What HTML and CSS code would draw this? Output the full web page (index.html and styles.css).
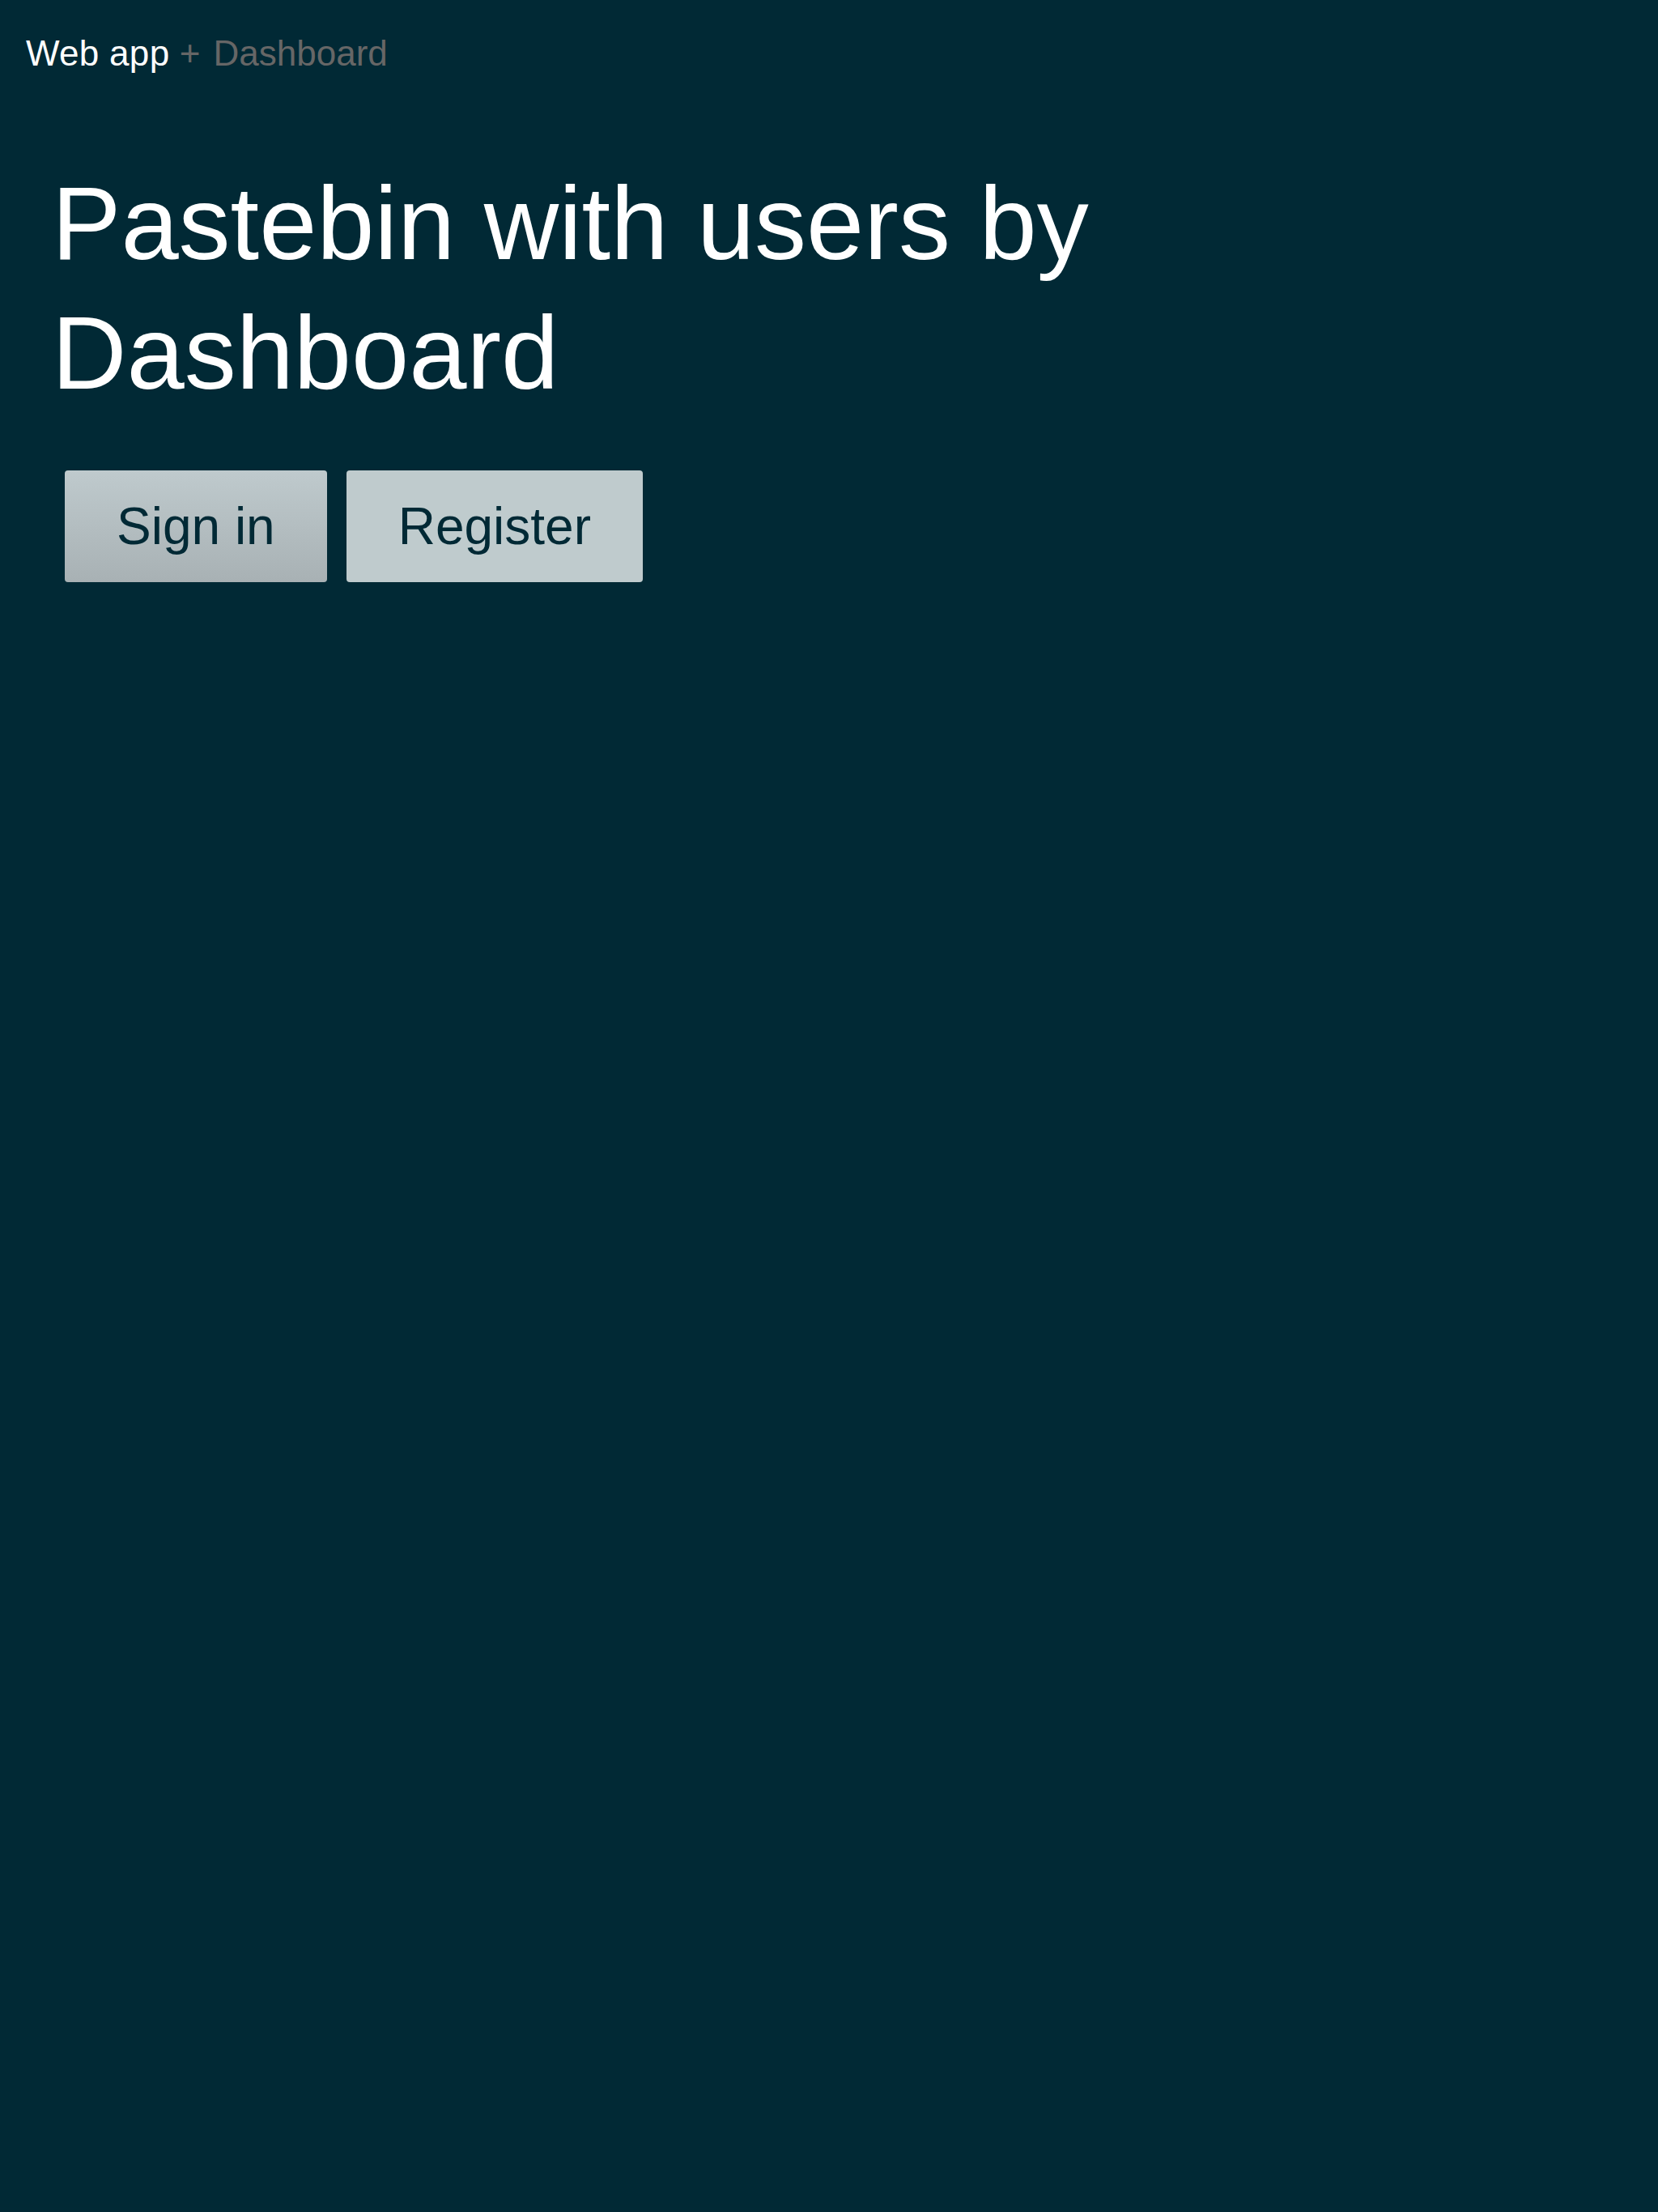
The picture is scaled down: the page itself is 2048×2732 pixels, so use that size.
FILE: index.html
```html
<!DOCTYPE html>
<html lang="en">
<head>
<meta charset="utf-8">
<title>Pastebin with users by Dashboard</title>
<link rel="stylesheet" href="styles.css">
</head>
<body>
<header class="topbar">
  <span class="brand">Web app</span> <span class="brand-sub"><span class="brand-plus">+</span> Dashboard</span>
</header>
<main class="hero">
  <h1 class="hero-title">Pastebin with users by Dashboard</h1>
  <div class="actions">
    <a class="btn btn-signin" href="#">Sign in</a>
    <a class="btn btn-register" href="#">Register</a>
  </div>
</main>
</body>
</html>
```
FILE: styles.css
```css
html, body {
  margin: 0;
  padding: 0;
  background: #012935;
  min-height: 100%;
}
body {
  font-family: "Liberation Sans", Arial, sans-serif;
  color: #ffffff;
  min-height: 2732px;
}
.topbar {
  padding: 41px 32px 0 32px;
  font-size: 44px;
  line-height: normal;
}
.brand {
  color: #ffffff;
  letter-spacing: 0.3px;
}
.brand-sub {
  color: #666666;
}
.brand-plus {
  margin-right: 4px;
}
.hero {
  padding: 0 64px;
}
.hero-title {
  margin: 105px 0 0 0;
  font-size: 128px;
  font-weight: normal;
  line-height: 160px;
  max-width: 1400px;
}
.actions {
  display: flex;
  gap: 24px;
  margin-top: 65px;
  padding-left: 16px;
}
.btn {
  display: inline-block;
  padding: 32px 64px;
  font-size: 64px;
  line-height: normal;
  color: #012935;
  text-decoration: none;
  border-radius: 4px;
}
.btn-signin {
  background: linear-gradient(to bottom, #bfcacd, #a8b1b4);
}
.btn-register {
  background: #bfcbcd;
}
```
